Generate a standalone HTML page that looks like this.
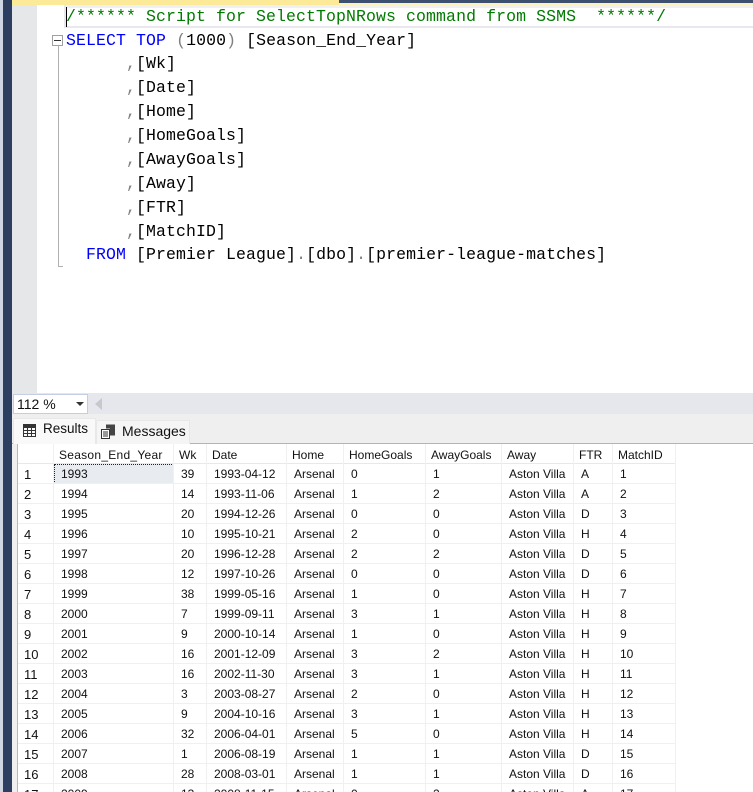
<!DOCTYPE html>
<html><head><meta charset="utf-8">
<style>
html,body{margin:0;padding:0;background:#fff}
#p{position:relative;width:753px;height:792px;overflow:hidden;background:#fff;font-family:"Liberation Sans",sans-serif}
#p div{position:absolute}
.c{font-family:"Liberation Mono",monospace;font-size:16.5px;letter-spacing:.1px;white-space:pre;height:24px;line-height:24px;color:#000;left:66px}
.k{color:#0000ff}.g{color:#808080}.m{color:#007a00}
.r{left:18px;width:657px;height:20px;border-bottom:1px solid #f0f0f0;box-sizing:border-box;font-size:12px;line-height:19px;color:#111}
.r span{position:absolute;top:1px;white-space:pre}
.a{left:6px;font-size:13px}.b{left:43px}.d{left:163px}.e{left:196px}.f{left:276px}.h{left:333px}.i{left:415px}.j{left:491px}.l{left:563px}.n{left:602px}
.v{position:absolute;width:1px;background:#f0f0f0;top:444px;height:348px}
</style></head><body><div id="p">
<div style="left:0;top:0;width:3px;height:792px;background:#cfd6e4"></div>
<div style="left:3px;top:0;width:9px;height:792px;background:#2d3f60"></div>
<div style="left:12px;top:0;width:327px;height:5px;background:#fdea98"></div>
<div style="left:339px;top:0;width:414px;height:3px;background:#3d5070"></div>
<div style="left:339px;top:3px;width:414px;height:2px;background:#fdf3b8"></div>
<div style="left:12px;top:5px;width:25px;height:388px;background:#e6e7e8"></div>
<div style="left:64px;top:5px;width:689px;height:3px;background:#f0f0f2"></div>
<div style="left:64px;top:26px;width:689px;height:2px;background:#e8e8ee"></div>
<div style="left:64px;top:5px;width:2px;height:23px;background:#e8e8ee"></div>
<div style="left:66px;top:7px;width:1px;height:20px;background:#000"></div>

<div style="left:52px;top:35px;width:9px;height:9px;border:1px solid #a0a0a0;background:#fff"></div>
<div style="left:54px;top:40px;width:7px;height:1px;background:#333"></div>
<div style="left:58px;top:46px;width:1px;height:221px;background:#b0b0b0"></div>
<div style="left:58px;top:266px;width:5px;height:1px;background:#b0b0b0"></div>

<div class="c m" style="top:5px">/****** Script for SelectTopNRows command from SSMS  ******/</div>
<div class="c" style="top:29px"><span class="k">SELECT</span> <span class="k">TOP</span> <span class="g">(</span>1000<span class="g">)</span> [Season_End_Year]</div>
<div class="c" style="top:52px">      <span class="g">,</span>[Wk]</div>
<div class="c" style="top:76px">      <span class="g">,</span>[Date]</div>
<div class="c" style="top:100px">      <span class="g">,</span>[Home]</div>
<div class="c" style="top:124px">      <span class="g">,</span>[HomeGoals]</div>
<div class="c" style="top:148px">      <span class="g">,</span>[AwayGoals]</div>
<div class="c" style="top:172px">      <span class="g">,</span>[Away]</div>
<div class="c" style="top:196px">      <span class="g">,</span>[FTR]</div>
<div class="c" style="top:220px">      <span class="g">,</span>[MatchID]</div>
<div class="c" style="top:243px">  <span class="k">FROM</span> [Premier League]<span class="g">.</span>[dbo]<span class="g">.</span>[premier-league-matches]</div>

<div style="left:12px;top:393px;width:741px;height:21px;background:#e6e7ec"></div>
<div style="left:13px;top:394px;width:73px;height:18px;background:#fff;border:1px solid #c4cee2;font-size:14px;line-height:18px;color:#111;text-indent:3px">112 %</div>
<div style="left:76px;top:402px;width:0;height:0;border-left:4px solid transparent;border-right:4px solid transparent;border-top:4px solid #333"></div>
<div style="left:95px;top:398px;width:0;height:0;border-top:6px solid transparent;border-bottom:6px solid transparent;border-right:7px solid #c8c8cc"></div>

<div style="left:12px;top:414px;width:741px;height:29px;background:#efeff0"></div>
<div style="left:12px;top:443px;width:741px;height:1px;background:#b4b4b4"></div>
<div style="left:13px;top:418px;width:81px;height:26px;background:#f9f9f9;border:1px solid #e8e8ea;border-bottom:0"></div>
<div style="left:96px;top:420px;width:92px;height:23px;background:#f5f5f5;border:1px solid #e8e8ea;border-bottom:0"></div>
<svg style="position:absolute;left:23px;top:424px" width="13" height="13" viewBox="0 0 13 13"><path d="M.5.5h12v12H.5zM.5 3.500h12M.5 6.500h12M.5 9.500h12M4.500 3.500v9M8.500 3.500v9" fill="none" stroke="#333"/><path d="M.5.500h12v3H.5z" fill="#333"/></svg>
<div style="left:43px;top:420px;font-size:13.5px;line-height:18px;color:#111">Results</div>
<svg style="position:absolute;left:101px;top:424px" width="15" height="15" viewBox="0 0 15 15"><path d="M.5 5.500h8v9h-8zM2 8h5M2 10h5M2 12h5" fill="#fff" stroke="#333"/><path d="M9 .5h5v11H9V4.500H5V.5z" fill="#444"/></svg>
<div style="left:122px;top:422px;font-size:14px;line-height:18px;color:#111">Messages</div>

<div style="left:18px;top:444px;width:735px;height:348px;background:#fff"></div>
<div style="left:17px;top:444px;width:1px;height:348px;background:#b8b8b8"></div>
<div style="left:12px;top:444px;width:5px;height:348px;background:#efeff0"></div>
<div style="left:54px;top:464px;width:120px;height:20px;background:#e8ebef;outline:1px dotted #222;outline-offset:-1px"></div>

<div class="r" style="top:444px;line-height:20px;border-color:#e8e8e8"><span style="left:41px;letter-spacing:.27px">Season_End_Year</span><span style="left:161px">Wk</span><span style="left:194px">Date</span><span style="left:274px">Home</span><span style="left:331px">HomeGoals</span><span style="left:413px">AwayGoals</span><span style="left:489px">Away</span><span style="left:561px">FTR</span><span style="left:600px">MatchID</span></div>
<div class="r" style="top:464px"><span class="a">1</span><span class="b">1993</span><span class="d">39</span><span class="e">1993-04-12</span><span class="f">Arsenal</span><span class="h">0</span><span class="i">1</span><span class="j">Aston Villa</span><span class="l">A</span><span class="n">1</span></div>
<div class="r" style="top:484px"><span class="a">2</span><span class="b">1994</span><span class="d">14</span><span class="e">1993-11-06</span><span class="f">Arsenal</span><span class="h">1</span><span class="i">2</span><span class="j">Aston Villa</span><span class="l">A</span><span class="n">2</span></div>
<div class="r" style="top:504px"><span class="a">3</span><span class="b">1995</span><span class="d">20</span><span class="e">1994-12-26</span><span class="f">Arsenal</span><span class="h">0</span><span class="i">0</span><span class="j">Aston Villa</span><span class="l">D</span><span class="n">3</span></div>
<div class="r" style="top:524px"><span class="a">4</span><span class="b">1996</span><span class="d">10</span><span class="e">1995-10-21</span><span class="f">Arsenal</span><span class="h">2</span><span class="i">0</span><span class="j">Aston Villa</span><span class="l">H</span><span class="n">4</span></div>
<div class="r" style="top:544px"><span class="a">5</span><span class="b">1997</span><span class="d">20</span><span class="e">1996-12-28</span><span class="f">Arsenal</span><span class="h">2</span><span class="i">2</span><span class="j">Aston Villa</span><span class="l">D</span><span class="n">5</span></div>
<div class="r" style="top:564px"><span class="a">6</span><span class="b">1998</span><span class="d">12</span><span class="e">1997-10-26</span><span class="f">Arsenal</span><span class="h">0</span><span class="i">0</span><span class="j">Aston Villa</span><span class="l">D</span><span class="n">6</span></div>
<div class="r" style="top:584px"><span class="a">7</span><span class="b">1999</span><span class="d">38</span><span class="e">1999-05-16</span><span class="f">Arsenal</span><span class="h">1</span><span class="i">0</span><span class="j">Aston Villa</span><span class="l">H</span><span class="n">7</span></div>
<div class="r" style="top:604px"><span class="a">8</span><span class="b">2000</span><span class="d">7</span><span class="e">1999-09-11</span><span class="f">Arsenal</span><span class="h">3</span><span class="i">1</span><span class="j">Aston Villa</span><span class="l">H</span><span class="n">8</span></div>
<div class="r" style="top:624px"><span class="a">9</span><span class="b">2001</span><span class="d">9</span><span class="e">2000-10-14</span><span class="f">Arsenal</span><span class="h">1</span><span class="i">0</span><span class="j">Aston Villa</span><span class="l">H</span><span class="n">9</span></div>
<div class="r" style="top:644px"><span class="a">10</span><span class="b">2002</span><span class="d">16</span><span class="e">2001-12-09</span><span class="f">Arsenal</span><span class="h">3</span><span class="i">2</span><span class="j">Aston Villa</span><span class="l">H</span><span class="n">10</span></div>
<div class="r" style="top:664px"><span class="a">11</span><span class="b">2003</span><span class="d">16</span><span class="e">2002-11-30</span><span class="f">Arsenal</span><span class="h">3</span><span class="i">1</span><span class="j">Aston Villa</span><span class="l">H</span><span class="n">11</span></div>
<div class="r" style="top:684px"><span class="a">12</span><span class="b">2004</span><span class="d">3</span><span class="e">2003-08-27</span><span class="f">Arsenal</span><span class="h">2</span><span class="i">0</span><span class="j">Aston Villa</span><span class="l">H</span><span class="n">12</span></div>
<div class="r" style="top:704px"><span class="a">13</span><span class="b">2005</span><span class="d">9</span><span class="e">2004-10-16</span><span class="f">Arsenal</span><span class="h">3</span><span class="i">1</span><span class="j">Aston Villa</span><span class="l">H</span><span class="n">13</span></div>
<div class="r" style="top:724px"><span class="a">14</span><span class="b">2006</span><span class="d">32</span><span class="e">2006-04-01</span><span class="f">Arsenal</span><span class="h">5</span><span class="i">0</span><span class="j">Aston Villa</span><span class="l">H</span><span class="n">14</span></div>
<div class="r" style="top:744px"><span class="a">15</span><span class="b">2007</span><span class="d">1</span><span class="e">2006-08-19</span><span class="f">Arsenal</span><span class="h">1</span><span class="i">1</span><span class="j">Aston Villa</span><span class="l">D</span><span class="n">15</span></div>
<div class="r" style="top:764px"><span class="a">16</span><span class="b">2008</span><span class="d">28</span><span class="e">2008-03-01</span><span class="f">Arsenal</span><span class="h">1</span><span class="i">1</span><span class="j">Aston Villa</span><span class="l">D</span><span class="n">16</span></div>
<div class="r" style="top:784px"><span class="a">17</span><span class="b">2009</span><span class="d">13</span><span class="e">2008-11-15</span><span class="f">Arsenal</span><span class="h">0</span><span class="i">2</span><span class="j">Aston Villa</span><span class="l">A</span><span class="n">17</span></div>

<div class="v" style="left:53px"></div><div class="v" style="left:173px"></div><div class="v" style="left:206px"></div><div class="v" style="left:286px"></div><div class="v" style="left:343px"></div><div class="v" style="left:425px"></div><div class="v" style="left:501px"></div><div class="v" style="left:573px"></div><div class="v" style="left:612px"></div><div class="v" style="left:675px"></div>
</div></body></html>
